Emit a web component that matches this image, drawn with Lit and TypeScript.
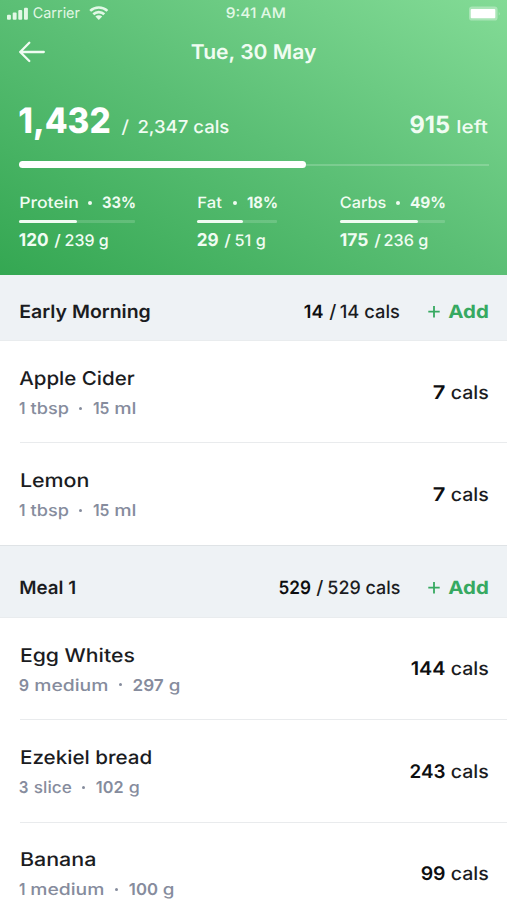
import { LitElement, html, css, nothing } from "lit";
import { customElement, property, query } from "lit/decorators.js";

// A run of text: its content, where its ink starts and ends on the line, its style.
type Run = [text: string, from: number, to: number, kind?: string];

interface Macro { label: Run[]; value: Run[]; full: number; done: number; }
interface Food { name: Run; detail: Run[]; cals: Run[]; }
interface Meal { name: Run; total: Run[]; foods: Food[]; }

const DOT = "•";

const macros: Macro[] = [
  {
    label: [["Protein", 20, 78], [DOT, 88, 92, "dot"], ["33%", 102, 135, "bold"]],
    value: [["120", 19.3, 48.5, "big"], ["/", 54, 61], ["239 g", 65, 108]],
    full: 116, done: 58,
  },
  {
    label: [["Fat", 198, 222], [DOT, 233, 237, "dot"], ["18%", 247, 277, "bold"]],
    value: [["29", 197.3, 218.5, "big"], ["/", 224, 231], ["51 g", 235, 265]],
    full: 80, done: 46,
  },
  {
    label: [["Carbs", 340, 386], [DOT, 396, 400, "dot"], ["49%", 410, 445, "bold"]],
    value: [["175", 340, 368, "big"], ["/", 373.5, 380.5], ["236 g", 384, 427.5]],
    full: 105, done: 78,
  },
];

const meals: Meal[] = [
  {
    name: ["Early Morning", 20.3, 150.3],
    total: [["14", 304.5, 323.5, "strong"], ["/", 329, 336.5], ["14 cals", 340.5, 400]],
    foods: [
      {
        name: ["Apple Cider", 19.3, 135],
        detail: [["1", 19.3, 25, "num"], ["tbsp", 30.5, 69], [DOT, 79.5, 82.5, "dot"], ["15", 93, 109, "num"], ["ml", 115.5, 136]],
        cals: [["7", 433, 445, "strong"], ["cals", 451, 488.3]],
      },
      {
        name: ["Lemon", 20.7, 88],
        detail: [["1", 19.3, 25, "num"], ["tbsp", 30.5, 69], [DOT, 79.5, 82.5, "dot"], ["15", 93, 109, "num"], ["ml", 115.5, 136]],
        cals: [["7", 433, 445, "strong"], ["cals", 451, 488.3]],
      },
    ],
  },
  {
    name: ["Meal 1", 20.3, 75.5],
    total: [["529", 279, 310.5, "strong"], ["/", 316, 323.5], ["529 cals", 328, 400]],
    foods: [
      {
        name: ["Egg Whites", 20.7, 134],
        detail: [["9", 19.3, 29, "num"], ["medium", 35.5, 108], [DOT, 119.5, 122.5, "dot"], ["297", 133, 163.5, "num"], ["g", 169.5, 180]],
        cals: [["144", 411, 445, "strong"], ["cals", 451, 488.3]],
      },
      {
        name: ["Ezekiel bread", 20.7, 151],
        detail: [["3", 19.3, 28.5, "num"], ["slice", 34, 71.5], [DOT, 82.5, 85.5, "dot"], ["102", 96, 123, "num"], ["g", 129, 139]],
        cals: [["243", 410, 445, "strong"], ["cals", 451, 488.3]],
      },
      {
        name: ["Banana", 20.7, 95],
        detail: [["1", 19.3, 25, "num"], ["medium", 31.5, 104], [DOT, 115.5, 118.5, "dot"], ["100", 129, 157.5, "num"], ["g", 163.5, 174]],
        cals: [["99", 421, 445, "strong"], ["cals", 451, 488.3]],
      },
    ],
  },
];

/** Text stretched so that its ink fills a given width. */
@customElement("fit-text")
export class FitText extends LitElement {
  @property() text = "";
  @property({ type: Number }) width = 0;
  @query("span") private span!: HTMLSpanElement;

  static styles = css`
    :host { display: inline-block; white-space: pre; flex: none; }
    span { display: inline-block; transform-origin: 0 50%; margin-right: -40px; }
  `;

  protected updated() {
    this.style.width = `${this.width}px`;
    const ctx = document.createElement("canvas").getContext("2d")!;
    const s = getComputedStyle(this);
    // Measured at 200px, where rounding of the glyph bounds no longer matters.
    ctx.font = `${s.fontWeight} 200px ${s.fontFamily}`;
    const m = ctx.measureText(this.text);
    const scale = parseFloat(s.fontSize) / 200;
    const before = m.actualBoundingBoxLeft * scale;
    const ink = before + m.actualBoundingBoxRight * scale;
    // Half a pixel on each side is left for antialiasing.
    const k = ink > 0 ? (this.width - 1) / ink : 1;
    this.span.style.transform = `translateX(${before * k + 0.6}px) scaleX(${k})`;
  }

  render() {
    return html`<span>${this.text}</span>`;
  }
}

@customElement("app-root")
export class AppRoot extends LitElement {
  static styles = css`
    :host {
      display: block;
      width: 507px;
      height: 900px;
      overflow: hidden;
      background: #fff;
      color: #1b1c1f;
      font-family: Inter, "Open Sans", sans-serif;
      font-weight: 500;
      text-rendering: geometricPrecision;
    }
    .hero {
      height: 275px;
      box-sizing: border-box;
      color: #f0fcf2;
      background: linear-gradient(to top right, #34a752, #5bbf75 50%, #83db96);
    }
    .line { display: flex; align-items: baseline; }
    .status {
      display: flex;
      align-items: center;
      height: 27px;
      line-height: 27px;
      font-size: 14.5px;
      padding-left: 7px;
      color: #e2f8e6;
    }
    .signal { margin-right: 5px; }
    .carrier { font-weight: 400; }
    .wifi { margin-left: 9px; }
    .clock { margin-left: 117px; }
    .battery { margin-left: 183px; }
    .nav {
      display: flex;
      align-items: center;
      height: 50px;
      padding-left: 18px;
      font-size: 20.3px;
      line-height: 50px;
      font-weight: 600;
    }
    .title { margin-left: 145px; }
    .summary {
      height: 40px;
      margin-top: 24px;
      line-height: 40px;
      font-size: 17.8px;
      font-weight: 500;
    }
    .eaten { font-size: 35px; font-weight: 800; color: #fff; }
    .left { font-size: 23.8px; font-weight: 700; }
    .semi { font-weight: 500; }
    .thin { font-weight: 400; }
    .progress {
      display: flex;
      align-items: center;
      height: 7px;
      margin: 20px 18px 0 19px;
    }
    .done { width: 287px; height: 7px; border-radius: 4px; background: #fff; }
    .rest { flex: 1; height: 2px; background: #ffffff30; }
    .macros { display: grid; grid-template-columns: 178px 143px 1fr; padding-left: 19px; margin-top: 24px; }
    .label { height: 22px; line-height: 22px; font-size: 15.6px; }
    .meter { height: 3px; margin: 6px 0 6px; background: #ffffff28; border-radius: 1px; }
    .fill { height: 3px; border-radius: 1.5px; background: #f0fcf2; }
    .value { height: 24px; line-height: 24px; font-size: 15.9px; }
    .bold { font-weight: 700; }
    .big { font-weight: 700; font-size: 17.6px; }
    .dot { align-self: center; border-radius: 50%; background: currentColor; }

    .head {
      display: flex;
      align-items: flex-end;
      height: 66px;
      box-sizing: border-box;
      padding-bottom: 16px;
      background: #eef2f5;
      border-bottom: 1px solid #e9ecee;
      font-size: 18.4px;
      line-height: 24px;
    }
    .meal + .meal .head { height: 73px; padding-bottom: 17px; border-top: 1px solid #dfe3e6; }
    .name { font-weight: 600; }
    .add { color: #36a961; font-weight: 700; }
    .plus { align-self: center; margin: 0 8px 0 28.5px; }
    .strong { font-weight: 600; color: #0d0e10; }
    .food {
      display: flex;
      align-items: center;
      height: 102px;
      box-sizing: border-box;
      margin-left: 20px;
      padding-top: 2px;
      border-bottom: 1px solid #e9ebed;
    }
    .meal + .meal .food { height: 102.4px; padding-top: 1px; }
    .food:last-child { border-bottom-color: transparent; }
    .info { margin-left: -20px; }
    .food-name { height: 26px; line-height: 26px; font-size: 19px; font-weight: 500; }
    .detail { height: 22px; line-height: 22px; margin-top: 5px; font-size: 16.4px; color: #868c9d; }
    .num { font-weight: 600; }
    .cals { line-height: 24px; font-size: 18.8px; }
  `;

  /** Lays runs on one baseline, starting at the given left edge. */
  private runs(list: Run[], start: number) {
    let at = start;
    return list.map(([text, from, to, kind = ""]) => {
      const gap = from - at;
      at = to;
      return kind === "dot"
        ? html`<i class="dot" style="margin-left:${gap}px;width:${to - from}px;height:${to - from}px"></i>`
        : html`<fit-text class=${kind || nothing} style="margin-left:${gap}px" .text=${text} .width=${to - from}></fit-text>`;
    });
  }

  private food(f: Food) {
    const infoEnd = Math.max(f.name[2], f.detail[f.detail.length - 1][2]);
    return html`
      <div class="food">
        <div class="info">
          <div class="line food-name">${this.runs([f.name], 0)}</div>
          <div class="line detail">${this.runs(f.detail, 0)}</div>
        </div>
        <div class="line cals">${this.runs(f.cals, infoEnd)}</div>
      </div>`;
  }

  private meal(m: Meal) {
    return html`
      <section class="meal">
        <div class="head">
          <div class="line name">${this.runs([m.name], 0)}</div>
          <div class="line">${this.runs(m.total, m.name[2])}</div>
          <div class="line add">
            <svg class="plus" width="12" height="12" viewBox="0 0 12 12" fill="none" stroke="currentColor" stroke-width="1.8">
              <path d="M6 0v11.4M.3 5.7h11.4" />
            </svg>
            <fit-text .text=${"Add"} .width=${40}></fit-text>
          </div>
        </div>
        ${m.foods.map((f) => this.food(f))}
      </section>`;
  }

  render() {
    return html`
      <header class="hero">
        <div class="status">
          <svg class="signal" width="21" height="14" viewBox="0 0 21 14" fill="currentColor">
            <rect x="0" y="7.7" width="3.9" height="5" rx="1" />
            <rect x="5.7" y="5.4" width="3.9" height="7.3" rx="1" />
            <rect x="11.3" y="3" width="3.9" height="9.7" rx="1" />
            <rect x="17" y=".7" width="3.9" height="12" rx="1" />
          </svg>
          <fit-text class="carrier" .text=${"Carrier"} .width=${47}></fit-text>
          <svg class="wifi" width="20" height="15" viewBox="0 0 20 15" fill="none" stroke="currentColor" stroke-width="2.6">
            <path d="M1.2 4.9a12.6 12.6 0 0 1 17.2 0" />
            <path d="M4.3 8.3a8.1 8.1 0 0 1 11 0" />
            <path d="M9.8 13.9 6.4 10.6a4.9 4.9 0 0 1 6.8 0z" fill="currentColor" stroke="none" />
          </svg>
          <fit-text class="clock" .text=${"9:41 AM"} .width=${59}></fit-text>
          <svg class="battery" width="34" height="16" viewBox="0 0 34 16">
            <rect x="1" y=".6" width="28.6" height="14" rx="3.2" fill="#fff" fill-opacity=".33" />
            <rect x="2.7" y="3" width="24.6" height="9.2" rx="1" fill="#fff" />
            <path d="M30.8 5.6q1.6 2 0 4z" fill="#fff" fill-opacity=".4" />
          </svg>
        </div>
        <nav class="nav">
          <svg width="28" height="24" viewBox="0 0 28 24" fill="none" stroke="currentColor" stroke-width="2.3" stroke-linecap="round" stroke-linejoin="round">
            <path d="M25.8 12H2.2M11.3 2.8 2.2 12l9.1 9" />
          </svg>
          <fit-text class="title" .text=${"Tue, 30 May"} .width=${126}></fit-text>
        </nav>
        <div class="line summary">
          ${this.runs([["1,432", 19.3, 110, "eaten"], ["/", 121, 129, "thin"], ["2,347 cals", 138, 229], ["915", 410.5, 450, "left"], ["left", 457.5, 488.5, "semi"]], 0)}
        </div>
        <div class="progress"><div class="done"></div><div class="rest"></div></div>
        <div class="macros">
          ${macros.map((m, i) => html`
            <div>
              <div class="line label">${this.runs(m.label, [19, 197, 340][i])}</div>
              <div class="meter" style="width:${m.full}px"><div class="fill" style="width:${m.done}px"></div></div>
              <div class="line value">${this.runs(m.value, [19, 197, 340][i])}</div>
            </div>`)}
        </div>
      </header>
      ${meals.map((m) => this.meal(m))}`;
  }
}
